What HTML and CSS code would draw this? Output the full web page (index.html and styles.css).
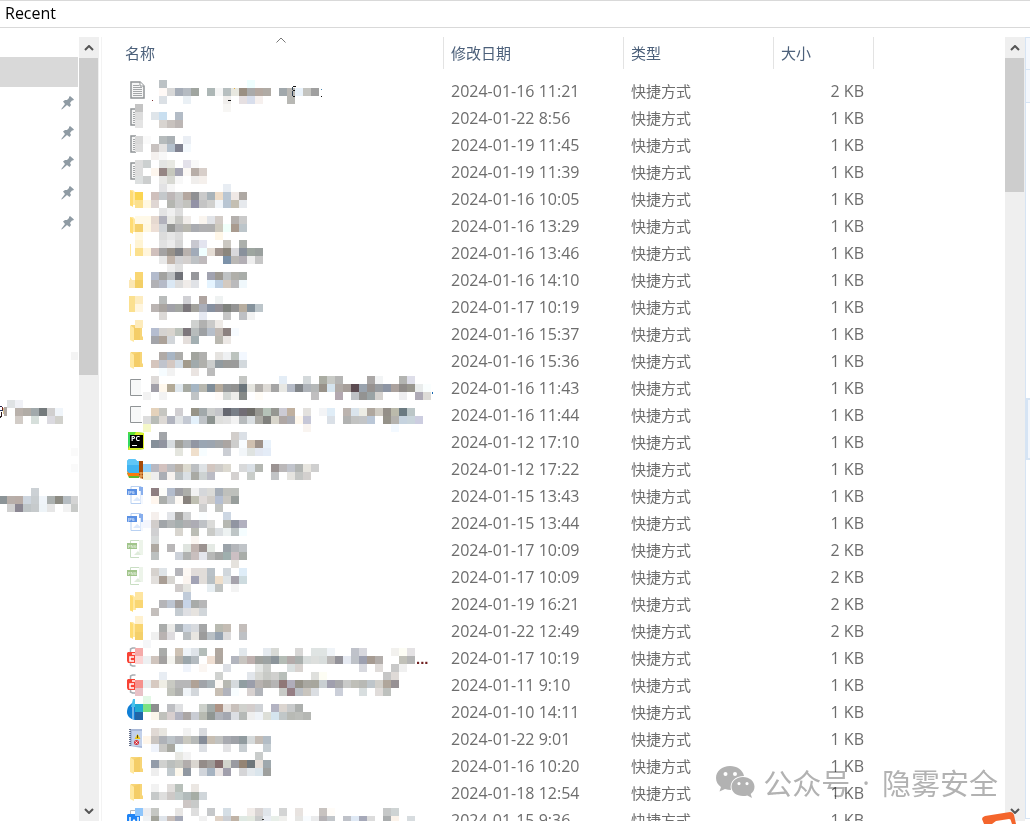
FILE: index.html
```html
<!DOCTYPE html>
<html lang="zh-CN">

<head>
    <meta charset="utf-8">
    <title>Recent</title>
    <link rel="stylesheet" href="styles.css">
</head>

<body>
    <!-- 图标 -->
    <svg class="symbols" aria-hidden="true">
        <symbol id="doc" viewBox="0 0 18 18">
            <path d="M4 1h9l4 4v12H4z" fill="#f6f6f6" stroke="#909496" stroke-width="1.5" />
            <path d="M13 1v4h4" fill="#fff" stroke="#909496" />
            <path d="M6 4.5h6M6 6.5h9M6 8.5h9M6 10.5h9M6 12.5h9M6 14.5h9" stroke="#a3a6a8" />
        </symbol>
        <symbol id="doc-cut" viewBox="0 0 18 18">
            <path d="M9 1H4v16h5" fill="#f6f6f6" stroke="#909496" stroke-width="1.5" />
            <path d="M6 4.5h3M6 6.5h3M6 8.5h3M6 10.5h3M6 12.5h3M6 14.5h3" stroke="#a3a6a8" />
        </symbol>
        <symbol id="blank" viewBox="0 0 18 18">
            <path d="M4 1h10v16H4z" fill="#f7f8f8" />
            <path d="M14 1.5H3.5v16H15" fill="none" stroke="#909496" />
        </symbol>
        <symbol id="folder" viewBox="0 0 18 18">
            <path d="M4 1h11v11l1 1v3H4z" fill="#f7d577" />
            <path d="M7 3l6-2v15H7z" fill="#f4cd67" />
            <path d="M3 1l4 3v14l-4-2z" fill="#ffe8a0" />
        </symbol>
        <symbol id="flap" viewBox="0 0 18 18">
            <path d="M3 1h3l3 3v12H6l-3 1z" fill="#ffe8a0" />
            <path d="M3 1l3 2v15l-3-2z" fill="#ffdc73" />
        </symbol>
        <symbol id="flap-pale" viewBox="0 0 18 18">
            <path d="M3 1h1v12H3z" fill="#ffe8a0" />
        </symbol>
        <symbol id="flap-low" viewBox="0 0 18 18">
            <path d="M2 10h6v8H2z" fill="#fbe7b4" />
            <path d="M3 7l2 3H3z" fill="#ffe8a0" />
        </symbol>
        <symbol id="flap-wide" viewBox="0 0 18 18">
            <path d="M2 -1h6v16H2z" fill="#fbe08f" />
            <path d="M8 -1h8v8H8z" fill="#fdecc0" />
        </symbol>
        <symbol id="pycharm" viewBox="0 0 18 18">
            <path d="M1 0h8l8 1v16l-8 1H1z" fill="#5fdd35" />
            <path d="M9 0l8 1v16l-8 1H1l2-8z" fill="#d9ee2b" />
            <path d="M1 1l4 2v8l-4 5z" fill="#35d860" />
            <path d="M3 3h13v13H3z" fill="#000" />
            <path d="M5 13h5v1H5z" fill="#fff" />
            <text x="4" y="9" font-size="7" font-weight="700" fill="#fff">PC</text>
        </symbol>
        <symbol id="winrar" viewBox="0 0 18 18">
            <path d="M0 14l12-1v6H2z" fill="#5fb82f" />
            <path d="M0 11h13v6H1z" fill="#fb7a0c" />
            <path d="M0 2l2-2h6l2 2h2v12H2l-2-2z" fill="#40b4f2" />
            <path d="M0 2l2-2h6l2 2h2v4H0z" fill="#5fc6f7" />
            <path d="M12 2h4v18l-4-2z" fill="#a64a09" />
            <path d="M12 14h4M12 17h4M14 13v7" stroke="#f2b263" />
        </symbol>
        <symbol id="jpg" viewBox="0 0 18 18">
            <path d="M4 0.5h10v17H4z" fill="#fff" stroke="#b9d1f2" />
            <path d="M6 15l4-4 5 4z" fill="#dde9fb" />
            <path d="M12 1h4v8h-2V5h-2z" fill="#87aeed" />
            <path d="M14 9h2v9h-2z" fill="#f3f7fe" />
            <path d="M0 3h10v6H0z" fill="#5a90e3" />
            <text x="1" y="8" font-size="4" font-weight="700" fill="#d5e4fb">JPG</text>
        </symbol>
        <symbol id="png" viewBox="0 0 18 18">
            <path d="M12 17.5H3.5V0.500H12" fill="#fff" stroke="#c9dec3" />
            <path d="M12 0h4v15h-4z" fill="#edf4ea" />
            <path d="M7 15l4-4 3 4z" fill="#dfecdb" />
            <path d="M0 3h10v6H0z" fill="#a1c58b" />
            <text x="1" y="8" font-size="4" font-weight="700" fill="#e2eedb">PNG</text>
        </symbol>
        <symbol id="pdf" viewBox="0 0 18 18">
            <path d="M3.5 4V1l2-1h3M3.5 14v3l2 1h3" fill="none" stroke="#a9adb2" stroke-width="1.5" />
            <path d="M1 4h7v11H1L0 13V5z" fill="#f84335" />
            <path d="M7 9H3v4h4M5 6h3" fill="none" stroke="#fff" stroke-width="1.5" />
        </symbol>
        <symbol id="edge" viewBox="0 0 18 18">
            <path d="M8 0C2 2 0 6 0 10s3 7 8 8z" fill="#0f7fd6" />
            <path d="M6 -3h2v8H4z" fill="#4ac3ee" />
            <path d="M6 5v12" stroke="#d9ecf9" />
        </symbol>
        <symbol id="book" viewBox="0 0 18 18">
            <path d="M3 0h12v19L3 17z" fill="#a9b9d8" />
            <path d="M5 2h10v15H5z" fill="#c3d1ea" />
            <path d="M3 0v17" stroke="#65708a" stroke-width="2" stroke-dasharray="1 1" />
            <path d="M10.500 5l3 5h-6z" fill="#edc718" />
            <path d="M10.5 6v3" stroke="#5c4a05" />
            <circle cx="9.5" cy="13.5" r="2.5" fill="#d3353f" />
            <path d="M8.500 12.500l2 2M10.500 12.500l-2 2" stroke="#fff" />
        </symbol>
        <symbol id="word" viewBox="0 0 18 18">
            <path d="M3.5 5V0.5H14" fill="none" stroke="#b3b8be" />
            <path d="M1 4h12v15H0V5z" fill="#1f84f5" />
            <path d="M3 7v5l2 1 2-3 2 3 2-1V7" fill="none" stroke="#fff" stroke-width="1.5" />
        </symbol>
        <symbol id="pin" viewBox="0 0 14 14">
            <path d="M9 0l4 3.500-1 1h-1L9 7l1 2-1.500 2L6 9l-4.500 4L0 13.500 1 12l3-4-2-2.500L4 4h2l2-2V1z" fill="#8f9ba4" />
        </symbol>
        <symbol id="up" viewBox="0 0 10 6">
            <path d="M1 5l4-4 4 4" fill="none" stroke="#555" stroke-width="2" />
        </symbol>
        <symbol id="down" viewBox="0 0 10 6">
            <path d="M1 1l4 4 4-4" fill="none" stroke="#555" stroke-width="2" />
        </symbol>
    </svg>

    <header class="address">Recent</header>

    <main class="explorer">
        <!-- 左侧导航 -->
        <nav class="nav" aria-label="导航">
            <div class="nav-current"></div>
            <ul class="pins">
                <li><svg class="pin"><use href="#pin" /></svg></li>
                <li><svg class="pin"><use href="#pin" /></svg></li>
                <li><svg class="pin"><use href="#pin" /></svg></li>
                <li><svg class="pin"><use href="#pin" /></svg></li>
                <li><svg class="pin"><use href="#pin" /></svg></li>
            </ul>
            <svg class="mosaic nav-mosaic" id="navMosaic" shape-rendering="crispEdges" aria-hidden="true"></svg>
        </nav>
        <div class="scroll">
            <button class="arrow" type="button" aria-label="向上滚动"><svg><use href="#up" /></svg></button>
            <div class="thumb thumb-nav"></div>
            <button class="arrow arrow-down" type="button" aria-label="向下滚动"><svg><use href="#down" /></svg></button>
        </div>

        <!-- 文件列表 -->
        <section class="list">
            <table class="files">
                <colgroup>
                    <col class="col-name">
                    <col class="col-date">
                    <col class="col-type">
                    <col class="col-size">
                </colgroup>
                <thead>
                    <tr>
                        <th>名称<svg class="sort" viewBox="0 0 10 6"><path d="M0.5 5.5l4.5-4.5 4.5 4.5" fill="none" stroke="#777" /></svg></th>
                        <th>修改日期</th>
                        <th>类型</th>
                        <th>大小</th>
                    </tr>
                </thead>
                <tbody id="rows"></tbody>
            </table>
            <svg class="mosaic list-mosaic" id="listMosaic" shape-rendering="crispEdges" aria-hidden="true"></svg>
            <div class="watermark">
                <svg class="wechat" viewBox="0 0 39 32">
                    <path fill="#b2b2b2" fill-rule="evenodd" d="M14 0C6 0 0 5.300 0 12c0 3.700 2 7 5 9l-1.500 4.500L9 23c2 .7 4 1 6 1C13 16 19 10 28 10 27 4 21 0 14 0zM9.500 6a2 2 0 1 1 0 4 2 2 0 0 1 0-4zM19 6a2 2 0 1 1 0 4 2 2 0 0 1 0-4z" />
                    <path fill="#b2b2b2" fill-rule="evenodd" d="M27 11c-6.500 0-11.500 4.300-11.500 9.700S20.500 30 27 30c1.500 0 3-.2 4.300-.6L36 32l-1.300-4c2.300-1.700 3.800-4.300 3.800-7.300C38.500 15.300 33.500 11 27 11zM23 16a1.600 1.600 0 1 1 0 3.200 1.600 1.600 0 0 1 0-3.200zM31 16a1.600 1.600 0 1 1 0 3.200 1.600 1.600 0 0 1 0-3.200z" />
                </svg>
                <span>公众号</span><span class="dot">·</span><span>隐雾安全</span>
            </div>
        </section>
        <div class="scroll">
            <button class="arrow" type="button" aria-label="向上滚动"><svg><use href="#up" /></svg></button>
            <div class="thumb thumb-list"></div>
            <button class="arrow arrow-down" type="button" aria-label="向下滚动"><svg><use href="#down" /></svg></button>
        </div>

        <aside class="edge">
            <div class="edge-head"></div>
            <div class="edge-head"></div>
            <div class="edge-box"></div>
        </aside>
    </main>

    <svg class="badge" viewBox="0 0 36 12" aria-hidden="true">
        <path d="M0 7q0-2 3-3L28 0q3 0 4 3l2 9H2z" fill="#f4652c" />
        <path d="M14 9l13-2q2 0 2 2l1 3H10z" fill="#fff" />
    </svg>

    <script src="script.js"></script>
</body>

</html>
```
FILE: styles.css
```css
/* reset */

body,
ul,
table {
    margin: 0;
    padding: 0;
}

ul {
    list-style-type: none;
}

* {
    box-sizing: border-box;
}

body {
    display: flex;
    flex-direction: column;
    height: 100vh;
    overflow: hidden;
    background: #fff;
    color: #6d6d6d;
    font: 16px/27px "Open Sans", "Noto Sans CJK SC", sans-serif;
}

svg {
    display: block;
}

.symbols {
    display: none;
}

/* 地址栏 */

.address {
    flex: none;
    height: 28px;
    padding-left: 5px;
    border-top: 1px solid #d9d9d9;
    border-bottom: 1px solid #d9d9d9;
    color: #000;
    line-height: 25px;
}

.explorer {
    display: flex;
    flex: 1;
    min-height: 0;
    padding: 9px 0 3px;
}

/* 左侧导航 */

.nav {
    position: relative;
    flex: none;
    width: 79px;
    padding-top: 20px;
    overflow: hidden;
}

.nav-current {
    height: 30px;
    margin-right: 1px;
    background: #d9d9d9;
}

.pins li {
    display: flex;
    align-items: center;
    justify-content: flex-end;
    height: 30px;
    padding: 2px 4px 0 0;
}

.pin {
    width: 14px;
    height: 14px;
}

/* 滚动条 */

.scroll {
    display: flex;
    flex: none;
    flex-direction: column;
    width: 20px;
    background: #efefef;
}

.arrow {
    display: flex;
    flex: none;
    align-items: center;
    justify-content: center;
    height: 21px;
    padding: 0 1px 0 0;
    border: 0;
    background: #efefef;
}

.arrow svg {
    width: 10px;
    height: 6px;
}

.arrow-down {
    margin-top: auto;
}

.thumb {
    margin-right: 1px;
    background: #cdcdcd;
}

.thumb-nav {
    height: 317px;
}

.thumb-list {
    height: 134px;
}

/* 文件列表 */

.list {
    position: relative;
    flex: 1;
    min-width: 0;
    margin-left: 2px;
    padding-left: 16px;
    border-left: 1px solid #f3f3f3;
    overflow: hidden;
}

.files {
    width: 756px;
    table-layout: fixed;
    border-collapse: separate;
    border-spacing: 0;
}

.col-name {
    width: 326px;
}

.col-date {
    width: 180px;
}

.col-type {
    width: 150px;
}

.col-size {
    width: 100px;
}

.files th {
    position: relative;
    height: 32px;
    padding: 0 0 0 7px;
    border-right: 1px solid #e3e3e3;
    color: #4c607a;
    font-size: 15px;
    font-weight: 400;
    text-align: left;
}

/* 排序箭头 */

.sort {
    position: absolute;
    top: 0;
    left: 50%;
    width: 10px;
    height: 6px;
    margin-left: -5px;
}

/* 表头和第一行的间距 */

.files tbody::before {
    content: "";
    display: block;
    height: 9px;
}

.files td {
    height: 27px;
    padding: 0 0 0 7px;
    line-height: 27px;
    white-space: nowrap;
}

.files .name {
    padding: 3px 0 0 9px;
    vertical-align: top;
}

.files .name svg {
    width: 18px;
    height: 18px;
    overflow: visible;
}

.symbols symbol {
    overflow: visible;
}

.files .type {
    font-size: 15px;
}

.files .size {
    padding-right: 10px;
    text-align: right;
}

/* 马赛克 */

.mosaic {
    position: absolute;
    top: -37px;
    height: 830px;
}

.nav-mosaic {
    left: 0;
    width: 78px;
}

.list-mosaic {
    left: -102px;
    width: 460px;
    overflow: visible;
}

/* 水印 */

.watermark {
    position: absolute;
    right: 7px;
    bottom: 17px;
    display: flex;
    align-items: center;
    gap: 8px;
    color: #b2b2b2;
    font: 29px/44px "Noto Sans CJK SC", sans-serif;
    mix-blend-mode: multiply;
}

.dot {
    padding: 0 4px;
    font-family: "Open Sans", sans-serif;
}

.wechat {
    width: 39px;
    height: 32px;
}

/* 右边缘 */

.edge {
    flex: none;
    width: 5px;
    margin-bottom: 2px;
    border-left: 1px solid #d6e4f4;
    border-bottom: 1px solid #d6e4f4;
}

.edge-head {
    height: 32px;
    border-top: 1px solid #d6e4f4;
    background: #f5f8fd;
}

.edge-head + .edge-head {
    height: 34px;
    border-bottom: 1px solid #d6e4f4;
}

.edge-box {
    height: 62px;
    margin-top: 295px;
    border: 2px solid #d6e4f4;
    border-right: 0;
    background: #f3f7fd;
}

.badge {
    position: fixed;
    right: 12px;
    bottom: 0;
    width: 36px;
    height: 12px;
}
```
FILE: script.js
```js
// 图标, 日期, 大小
var files = [
    ["doc", "2024-01-16 11:21", 2],
    ["doc-cut", "2024-01-22 8:56", 1],
    ["doc-cut", "2024-01-19 11:45", 1],
    ["doc-cut", "2024-01-19 11:39", 1],
    ["flap", "2024-01-16 10:05", 1],
    ["flap", "2024-01-16 13:29", 1],
    ["flap-pale", "2024-01-16 13:46", 1],
    ["flap-low", "2024-01-16 14:10", 1],
    ["flap-wide", "2024-01-17 10:19", 1],
    ["folder", "2024-01-16 15:37", 1],
    ["folder", "2024-01-16 15:36", 1],
    ["blank", "2024-01-16 11:43", 1],
    ["blank", "2024-01-16 11:44", 1],
    ["pycharm", "2024-01-12 17:10", 1],
    ["winrar", "2024-01-12 17:22", 1],
    ["jpg", "2024-01-15 13:43", 1],
    ["jpg", "2024-01-15 13:44", 1],
    ["png", "2024-01-17 10:09", 2],
    ["png", "2024-01-17 10:09", 2],
    ["flap", "2024-01-19 16:21", 2],
    ["flap", "2024-01-22 12:49", 2],
    ["pdf", "2024-01-17 10:19", 1],
    ["pdf", "2024-01-11 9:10", 1],
    ["edge", "2024-01-10 14:11", 1],
    ["book", "2024-01-22 9:01", 1],
    ["folder", "2024-01-16 10:20", 1],
    ["folder", "2024-01-18 12:54", 1],
    ["word", "2024-01-15 9:36", 1]
];

// 马赛克: y坐标, "列号: 颜色 颜色 ..."
var listCells = [
    [80, "1: bcc2c5 10: fff 11: fff 12: efffff"],
    [88, "1: fff9f6 d8d8d8 a6adb8 b5bbc2 a0a5a0 7: adb7b6 f6f6f6 b7bfc0 e8e8e0 9b9083 aaaaaa b4a8a0 b0aba5 16: a1a8ac bab8b4 eaf3fb c4c4c0 a0a0a0"],
    [96, "1: dbe0e5 4: eaf0f5 9: f0eeec 11: e6e0e2 d8deec f6f0ee 17: b8b8b4"],
    [104, "-2: c4c4c4 9: f7f6f4"],
    [112, "-2: dddddd 0: dfe5ea c9dff0 3: b3bcc6"],
    [120, "-2: e4e4e4 1: d8d4d0 c8c2be bcb6b4"],
    [136, "-2: d8d8d8 fafafa 1: b6bbbc aab0b4 4: eaeef4"],
    [144, "-2: dddddd 0: c8c2c0 e5e3e2 b4c0cc 808290 f4f9fd"],
    [152, "0: f4f0ee f8f8f8"],
    [160, "-2: dddddd ccd0d0 1: e3e5e3 e8e9e3 4: e3e1ea f9f9f9"],
    [168, "-2: dddddd 0: fdf6ee 958684 c6c8bd a5a5b3 fbf8f5 b8aea8 d8cfca"],
    [176, "-2: dde0e0 cccece 1: e8e8e6 d8d9d3 f8f8f8 5: f0eeec f5f0ec"],
    [184, "1: e2e2e4 f6f6f6 9: e8edf3"],
    [192, "-2: fbd551 0: cfc0bc c4c8cb bdb7b7 c9cac9 b4a79f 8f9093 cacaca a9b3b9 efddc8 b9c6d3 efe8e5 aea8a3"],
    [200, "-2: fbe08e fff8e2 dfd6d3 ffffff b5b6b1 cacaca c3c3be 9392a6 c4c4c4 d0d0ce f1f5f9 b9c6d3 c4bfb3 e6e9ed"],
    [208, "1: e4e4e4 f0f0f0 dddddd"],
    [216, "-2: fff9e8 fff9e8 e6d9d0 b2b2bc e8e8e4 c8c8c4 f0ece9 6: faf5ef e2e4e8 d3ccc7 10: b4b0ad cacaca"],
    [224, "-2: f4d06d fff8e2 eddfd6 d1d4d7 969795 b5b5b5 b9b8b0 a9abb0 b0b0b2 b0b0b0 cecabf f0fffa a99b8f bcc5ca"],
    [232, "-2: fff8e2 1: dcdcdc e6e6e6 dcdcdc 8: fff7e8"],
    [240, "-2: fff4d4 1: e2e2e2 ececec d6d6d6 5: c8c8d0 e3e4ef 9: cbc8c2 11: acb0ac"],
    [248, "-2: fbe08e fff5dc d0c0bc a4a3a3 98928a 7f8186 b9b2ae a1abb9 f0ffff e5ddd5 a1958f 8b867d d9d9dc 89919c 9ea6a0 9aa09e"],
    [256, "1: e8e8e8 c2b5ab d2d2d4 d4d0ce bec2c5 bfbabc 9: 7c92a9 bab8b5 b3afb5 eeeeee c6c6c6"],
    [264, "2: eeeeee e0e0e0"],
    [272, "-2: f9d672 0: b3bbcc a2a2a0 bbbec0 707278 5: 96979b 7: a1a3b0 9d9992 bfc2c3 b0afa9 a9ada9"],
    [280, "-2: f3cf66 0: b1b1b5 b6bbc8 dbe8f4 dddddd f0ece9 e0e2e6 7: e5f4ff bdcfe2 d4cac0 bababc f0f8fc"],
    [296, "1: b9bcbb 4: d0d0d4 6: aea4a0 8: eff2f2"],
    [304, "-2: fff6e0 0: bab4b2 aaa5a1 a1a1a8 a3a6a2 7b777b a3a29d aaaeb9 8690a0 928f95 7f827d 949494 b7ad9f 85929c bcc5ca"],
    [312, "1: dcd9d7 6: e6e9f2 9: c6c6c6 11: bec0c4 f2f2f2"],
    [320, "-2: fdebbb 5: cfd1cf b1b1b0 cacac9 eeeae6"],
    [328, "0: b5bdd0 d5d3d1 d9d5cf bdc3bc 7d777c b7bcbc 9ea1a4 b7bfca c1b9b3 8c817f f7fbff"],
    [336, "0: a3a4a9 aca299 d2d6da 4: e4dedb a3afb2 8: bab8b0 ece8e5"],
    [352, "1: b0aaa6 a8b5c4 acacaa 5: a2a49e b0b0ae 8: e5e3e0 eef0f2 bcc3be f3f8ff"],
    [360, "0: d5c5bd c0c4cd d4c8c2 d2dce5 a39b8c a1aaac b0b0ac cccecd 929ba0 9b9b99 9b9b9b d3d9dd"],
    [368, "1: f6fcff f2f2f2 5: eae4e1 7: bcbcbc"],
    [376, "0: dedad8 11: c4c6c3 16: e4edf6 19: d4d9db 21: aaaca2 c8cac6 b5b5b4 27: aaa7a6 f2f4f5 31: b3b4b1 dedee9"],
    [384, "0: a19fa8 fff8ed b3aa97 dfe7ed a7aaa2 a5b5c3 b7b7af 7f8d98 b4aa9c 939697 929291 6b757b e5e5df b3b0ac dddad5 a5a5a5 e8e8e4 b5bbc7 818589 aeb3b9 b5b8b8 989289 d5e4ee b0aaa6 a79f9a 5c4b51 99a3ae 979290 989ca1 8d95a4 aba29e 908c89 99978f e9ecec fafefe"],
    [392, "-1: f2f2f2 1: f3f3f3 5: c0c4c6 8: fffbf8 d3d7d4 ededea 868a88 13: fffcf6 20: c0bfc0 23: b3a8b0 25: bfc2c6 939392 9aa3a5 d5d2cf 31: eeeef0 33: aeaab6 dddbd7"],
    [408, "0: e4d2bb c6c6c1 3: d1cfd2 5: 979488 a2a9ab cccecd c4c5c9 656770 797f88 716d75 6e6d69 979791 b5c2b8 969792 cccbd4 c0b09f 19: e3e1de 21: f3f4f6 e0edf7 24: bcb4af dae4ec edede5 afa79e cfcbc2 948f88 bbbaab 6b7a81 bbc6c7"],
    [416, "-1: dddddd b8bcb7 ddd9d5 b1b4bf e1e4e6 c4c9d3 e4f1fb bfc3c7 8c9390 dfdfdd e2e2e2 f2f2f2 b7bbbd dadfe2 abaaa4 80807d d8d5cb afa7a4 abacb3 fff8ed c6c7d7 22: dae0e7 24: b1b2b1 c2c3c2 c3c5c7 bac7d7 29: 959289 b4b2ae c6d3df c9d5dc cccde0"],
    [424, "-1: f5f8c8 19: f9f4f0 30: f3f9ff"],
    [432, "1: a2a5a9 10: d2cecb dbe0e6"],
    [440, "0: 86909a 9194a0 d7dcdf a1a19b aeb3b7 9196a3 9aa6b3 9ca5b0 a3a6a9 aba5a2 cdcdcc f8fcff cfc0b0 9e928a e9f2fb"],
    [448, "3: e4e5de 5: efdfcc f7fdff 9: cbced4 11: f2f6f9 dfe3e1 e3e8f2 e4ecf7"],
    [464, "-1: 8ecffa b8b8c1 d3c2bf bbbcc0 b9b2a9 dcdacf bcbfc2 dee2e5 d2c6c0 ceccc9 dcd9d0 11: d8d9da dae0e6 b4b7b2 15: 9b9392 bbb8b9 c1c4cc b2b5b3 e7e5df cfcfcf"],
    [472, "-1: f2f0d8 eeeeee abaeb5 f7f3f0 bac0c2 dae0e4 a9aaa4 cdd2d2 bbbcc5 10: d4d1d0 12: c9cdca 15: c2c4c6 17: e5e4e0 c4c6c4 d3d0ce"],
    [488, "0: 8f7f82 fcfdf9 b3bccc 9e9ea3 adaeaa f2f2f2 d5d7da dbdbd8 a6aeb8 bfc0bc bdc0bc"],
    [496, "0: fff6ee abaeab c8cbce fdf9f4 88827d bfbfb2 e0dbd9 d1cdc8 b5bfd2 c9c7c2 989e9c"],
    [504, "6: cecece 8: c2c4c2"],
    [512, "0: f5efec 2: e2e4e8 a2a19f d1d2d3 6: fbfeff 9: cdd7e3"],
    [520, "-1: f4f6fd d1cdcb a1a5a9 b2b5b6 a6aeae b0b0b2 adacb4 bfc2c6 dbdbd9 9: b6b8b2 9195a2 b1b0bf"],
    [528, "0: d0d0d2 3: d8d5cf 5: bcbdb5 7: cacbc8 dce0e3 edf2f2 bec5c6 f5fdff"],
    [536, "0: d6d9d9 5: fbf6f2"],
    [544, "0: aea8a1 2: b9b7b8 4: dfe4df c1b4b0 9b9290 e5eae5 9: 9ba3a9 b4b6ba c0c4c8"],
    [552, "0: bdc1c0 3: ccd1d9 b0b2b1 c9bfbe e4e6ed b7b8b7 a4a6a5 9fafae ccbfc3 a9ada9"],
    [560, "10: e5e2dd"],
    [568, "0: d6d2ce dfe4e8 3: b5b5ba fdf8f4 e1dcda e1ddd9 b9c1c7 9: d1d7dc 11: dfedf8"],
    [576, "0: e2dfdc a99e95 d7d5d1 4: fbf4ef a2a3b5 e1ddd9 b7bfc3 efdfcb dfe4e6 a6a3ac cddbdf"],
    [584, "3: cfcbca e4e4e0 7: e7eef2 c1c4c2 10: f3f3f3"],
    [592, "-2: fee5a0 4: c0cbd9"],
    [600, "-2: f9d673 1: b5b5b8 bdc5d1 a29e9c c7d4e8 a8aba9 b7b7b8"],
    [608, "0: c4bfbc 3: c4cbd1 dedfe3 e6e3df d1d6da"],
    [616, "-2: fff1cf"],
    [624, "-2: f9d570 1: aaacab eaeae8 a6adb3 ccd4de d7dade a5a6a7 8: b9bab1 c4bcb3 11: c3bdba"],
    [632, "-2: f4d06a 0: f0f0f0 b9b3b2 dedcdf 4: b9bec1 e8e6e1 9c9c9c b9c0c5 95a2b0 dcdbdc 11: bec1c5"],
    [640, "-1: f5f6f8"],
    [648, "-2: f5aaa9 1: aaacaa 3: cec2b4 eff4f8 dfe4e9 b4bdb9 8: b0a79f 11: e2e8ec 14: e5eaef d8dad6 18: d8d7d6 20: dfe4e3 dfe4e3 f0f4f8 25: bfc2ca d8d8de 30: f2f1ee fdfdf5 e4e2e4"],
    [656, "-2: fbd5d5 edf0f2 cfc4bd a3a1a0 f4f4ef b5b1aa 9ba6ab b4bbc0 7: efdfd3 aea69f 10: b2b5be c8c5c0 beb0ae a0a29e 9da3a3 8c959b b4bcb5 b3aaa9 aab0ae d8dddc dddfdd d8dddc bbb9b8 939299 e6eaf2 bec2c8 9da0b0 a69b92 b2adaa 31: c1c1b9 b5b6b6"],
    [664, "4: f0f4fb 6: fbf6f2 9: dcdfe5 13: e4e6e4 cdcfcc 17: dae0e0 d8d3d0 26: d8d9df 28: e0dcda 30: c8c8c8 f0f0f0"],
    [672, "1: e8edf3 8: d0d2d0 12: e2e6eb d7d8d4 c8cac6 d0d0ce b8bfba 20: dfe0dd fdfdf4 29: c6c6c6 dfdad7"],
    [680, "-2: f6918d e9eef0 d7cac1 efeee5 c9cac3 b7b7b8 b7b7b8 b0a296 a1a4a9 aab3b8 fcf9f5 b7b8b1 d5dadd 919ea2 9b9eab b8b3b0 aba9a4 b5b4b4 8f7777 b0adba 969389 a8a7a0 a7a69d c9cfd2 a09fae a8a8ab c9cac9 bfbfb8 b8b9b5 bec5ca d1cfca b0a69b 979194"],
    [688, "-2: e8c2c7 2: c1c3bb afb0ae f0f4f8 d3d7db 8: c8bfb4 b1b3bc f8fdff 12: d7d1d0 b1b4ba 16: c8cac7 957e84 bbc0c6 c9c5be dbdee2 23: cbcfd9 26: d8dedf 28: e0dcda bec1be"],
    [696, "-1: e3f8e6"],
    [704, "-2: 22abd3 7be283 8d8e8f 2: bebfc3 dfe0e2 6: ccd0ca a3aba9 ae9385 e4e0dd c8c0bb d0d1cd d3cdcc cfd2d6 15: b3b3c2 dbd5d0 c8cacb adb0ae"],
    [712, "-2: 2165a7 0: fbf6eb c0c1bc d8cfcf b3b4c1 aba6a5 c9ccd3 b7bab1 909693 b0b3ba a4a7b0 dcdee3 b5b9b7 efefef eff3f8 dddfd8 d5e4ee c1c7c8 b8bab5 bcbeba b5b7b3"],
    [728, "0: e0d9d4 e8e6e0 4: f2f2f2 6: d9dbdf"],
    [736, "-1: fff6ea cac5c1 afb2b8 bcc3c8 b2b5bb c9c8bf b6b9b8 858c98 c7beb2 c1c2c0 a8aab0 9fa2a8 919b9f d6dadb c4bcb5 b3bdc6"],
    [744, "0: eff3fb c9c8c5 a8a9a2 f6fdff 6: dcdfe4 9: e3e3e5 11: c8ced2 14: c5cdd2"],
    [752, "3: e8e8e3 f3f3f3 13: c9cccb"],
    [760, "0: 939ca9 d0d1cf bbbfbd c5c6c0 b2adac dad6d0 948c89 a09c99 856d6d d2d4cc 999aa1 948473 6f777b e5ded8 9ea8ad"],
    [768, "0: eeeeee 2: c2cace fdf8ec 9198a1 6: d1d5db a6b3c1 e9e4e3 a19fac 11: d5d5d7 e4e9ed dae5ec 9ea09e"],
    [784, "0: f2f2f2 2: e1dedc b8c0ba 5: ebe7e3"],
    [792, "0: c6c9c9 dededd cdc9c7 c2cbca b2bbbb a6ada5 d0d6da"],
    [800, "4: cdc6c4 c8cac9"],
    [808, "-2: 8ec5fb ededf0 c5c7c3 3: e8e6e4 5: dedede 7: c6c8ca 9: d5dee5 12: f1ece9 d8d3d2 e0e5ea 16: d3d4d4 18: e8e3e0 21: c8c3c0 fffcf8 29: c6c8c8 cfd4d4"],
    [816, "-1: f0f2f4 a3a49b dfe4ea c8beb9 a5a9b7 6: f0f0f0 8: dfd2c6 cccfd4 c0b3a6 dfe9e3 e3e9e0 c9cbcb eaeef4 e8efe9 f0f0ed 18: e6e6e4 f8fcff eaebec b6b3b6 c2c6ca 24: bfc2c9 dfe9f5 a6a9b9 dcdcdc 29: aaadae fcf3ea 32: d7dcdf"]
];

var navCells = [
    [352, "9: f4f4f4"],
    [400, "1: dfe2e4 f0f1f6"],
    [408, "2: b9b1ab b1aca6 a1a9ab 747a7c d0cfcf f0f5fa"],
    [416, "2: d2ccc7 4: d6dfdb 6: dbdae0 d1d1cc"],
    [448, "9: fafafa"],
    [464, "9: fafafa"],
    [488, "4: ccd1d5"],
    [496, "0: 8c9497 b7aea9 b8aca6 ced6df c8cdd0 f0f5fa abb0af 8c8b83 b6bdc2 d4d4d4"],
    [504, "1: d0d0d0 8b8792 bfc5c7 c6cacc eef4f8 e6e6e6 8: f2f2f2 c8cac8"]
];

// 没有盖住的零碎笔画: x, y, 宽, 高, 颜色
var listBits = [
    [152, 100, 1, 1, "#803030"],
    [228, 100, 3, 1, "#111"],
    [234, 88, 1, 1, "#e8b040"],
    [293, 86, 3, 1, "#111"],
    [292, 87, 1, 3, "#345"],
    [293, 90, 2, 1, "#111"],
    [292, 91, 1, 5, "#345"],
    [293, 96, 2, 1, "#111"],
    [321, 89, 1, 1, "#4a86b0"],
    [321, 96, 1, 1, "#111"],
    [432, 392, 1, 2, "#1668b0"],
    [262, 819, 2, 1, "#333"]
];
var navBits = [
    [0, 406, 2, 1, "#2a2a50"],
    [2, 407, 1, 3, "#702020"],
    [0, 410, 3, 1, "#2a3a60"],
    [3, 408, 1, 6, "#d8c090"],
    [1, 412, 1, 5, "#301818"],
    [0, 416, 1, 2, "#333"],
    [4, 407, 3, 9, "#b0a8a4"]
];

function rect(x, y, w, h, color) {
    return '<rect x="' + x + '" y="' + y + '" width="' + w + '" height="' + h + '" fill="' + color + '"/>';
}

// 画马赛克, 每格8px
function drawMosaic(id, left, cells, bits, extra) {
    var Tmp = [];
    for (var i = 0; i < cells.length; i++) {
        var col = 0;
        var parts = cells[i][1].split(" ");
        for (var j = 0; j < parts.length; j++) {
            // 带冒号的是列号
            if (parts[j].indexOf(":") > 0) {
                col = parseInt(parts[j], 10);
            } else {
                Tmp.push(rect(left + col * 8, cells[i][0], 8, 8, "#" + parts[j]));
                col++;
            }
        }
    }
    for (i = 0; i < bits.length; i++) Tmp.push(rect.apply(null, bits[i]));
    document.getElementById(id).innerHTML = Tmp.join("") + extra;
}

// 生成文件行
var Rows = [];
for (var i = 0; i < files.length; i++) {
    Rows.push('<tr><td class="name"><svg aria-hidden="true"><use href="#' + files[i][0] + '"/></svg></td>' +
        '<td>' + files[i][1] + '</td><td class="type">快捷方式</td><td class="size">' + files[i][2] + ' KB</td></tr>');
}
document.getElementById("rows").innerHTML = Rows.join("");

drawMosaic("listMosaic", 151, listCells, listBits, '<text x="416" y="664" font-size="15" font-weight="700" font-family="Liberation Sans" fill="#702020">...</text>');
drawMosaic("navMosaic", -1, navCells, navBits, "");
```
